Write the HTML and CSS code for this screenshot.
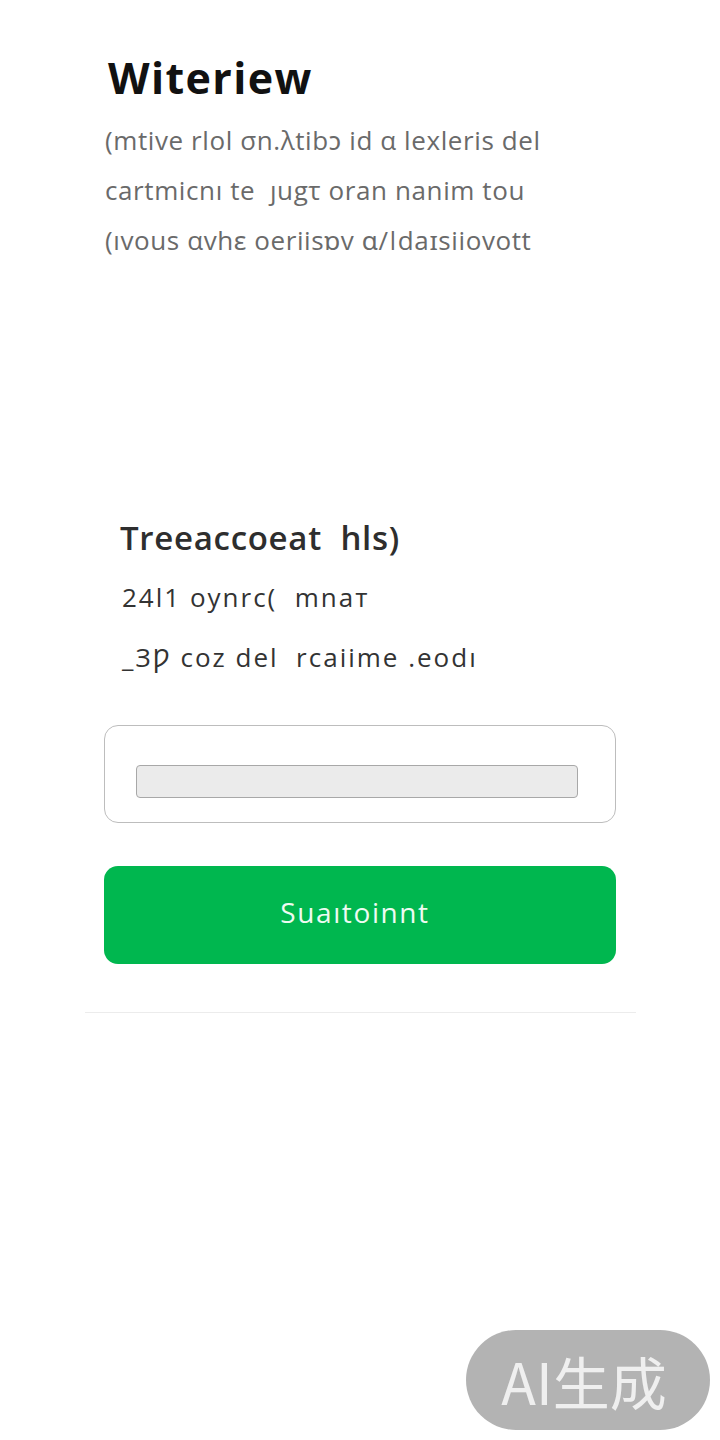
FILE: index.html
```html
<!DOCTYPE html>
<html lang="en">
<head>
<meta charset="utf-8">
<link rel="stylesheet" href="styles.css">
</head>
<body>
<main class="page">
  <header class="intro">
    <h1 class="title">Witeriew</h1>
    <p class="lead">(mtive rlol σn.λtibɔ id α lexleris del<br>cartmicnı te&nbsp; ȷugτ oran nanim tou<br>(ıvous αvhɛ oeriisɒv ɑ/ǀdaɪsiiovott</p>
  </header>
  <section class="details">
    <h2 class="subtitle">Treeaccoeat&nbsp; hls)</h2>
    <p class="meta">24l1 oynrc(&nbsp; mnaт</p>
    <p class="meta">_ЗǷ coz del&nbsp; rcaiime .eodı</p>
  </section>
  <div class="field">
    <div class="field-bar"></div>
  </div>
  <button class="submit">Suaıtoinnt</button>
  <hr class="divider">
</main>
<div class="ai-badge">AI生成</div>
</body>
</html>
```

FILE: styles.css
```css
* { box-sizing: border-box; }
html, body { margin: 0; padding: 0; background: #ffffff; }
body {
  width: 720px;
  height: 1440px;
  font-family: "Open Sans", "Noto Sans", sans-serif;
  position: relative;
  overflow: hidden;
}
.page {
  padding: 53px 0 0 0;
  display: flex;
  flex-direction: column;
}
.intro { padding-left: 108px; }
.title {
  margin: 0;
  font-size: 43px;
  line-height: 50px;
  font-weight: 700;
  color: #111;
  letter-spacing: 1.4px;
}
.lead {
  margin: 12px 0 0 -3px;
  font-size: 26px;
  line-height: 50px;
  color: #6a6a6a;
  letter-spacing: 0.6px;
}
.details {
  margin-top: 251px;
  padding-left: 120px;
}
.subtitle {
  margin: 0;
  font-size: 33px;
  line-height: 44px;
  font-weight: 600;
  color: #2e2e2e;
  letter-spacing: 0.7px;
}
.meta {
  margin: 0;
  font-size: 26px;
  line-height: 60px;
  color: #333;
  letter-spacing: 2px;
  padding-left: 2px;
}
.meta:first-of-type { margin-top: 7px; }
.field {
  margin: 38px 0 0 104px;
  width: 512px;
  height: 98px;
  border: 1px solid #bdbdbd;
  border-radius: 14px;
  padding: 39px 37px 0 31px;
}
.field-bar {
  height: 33px;
  background: #ebebeb;
  border: 1px solid #a8a8a8;
  border-radius: 4px;
}
.submit {
  margin: 43px 0 0 104px;
  width: 512px;
  height: 98px;
  border: none;
  border-radius: 14px;
  background: #00b74f;
  color: #eefbf2;
  font-family: "Open Sans", "Noto Sans", sans-serif;
  font-size: 28px;
  letter-spacing: 1.6px;
  padding: 0 0 6px 0;
  text-indent: -10px;
}
.divider {
  margin: 48px 0 0 85px;
  width: 551px;
  border: none;
  border-top: 1px solid #ececec;
}
.ai-badge {
  position: absolute;
  left: 466px;
  top: 1330px;
  width: 244px;
  height: 100px;
  border-radius: 50px;
  background: #b3b3b3;
  color: #efefef;
  font-family: "Noto Sans CJK SC", sans-serif;
  font-size: 57px;
  line-height: 100px;
  text-align: center;
  padding-right: 8px;
}
```
